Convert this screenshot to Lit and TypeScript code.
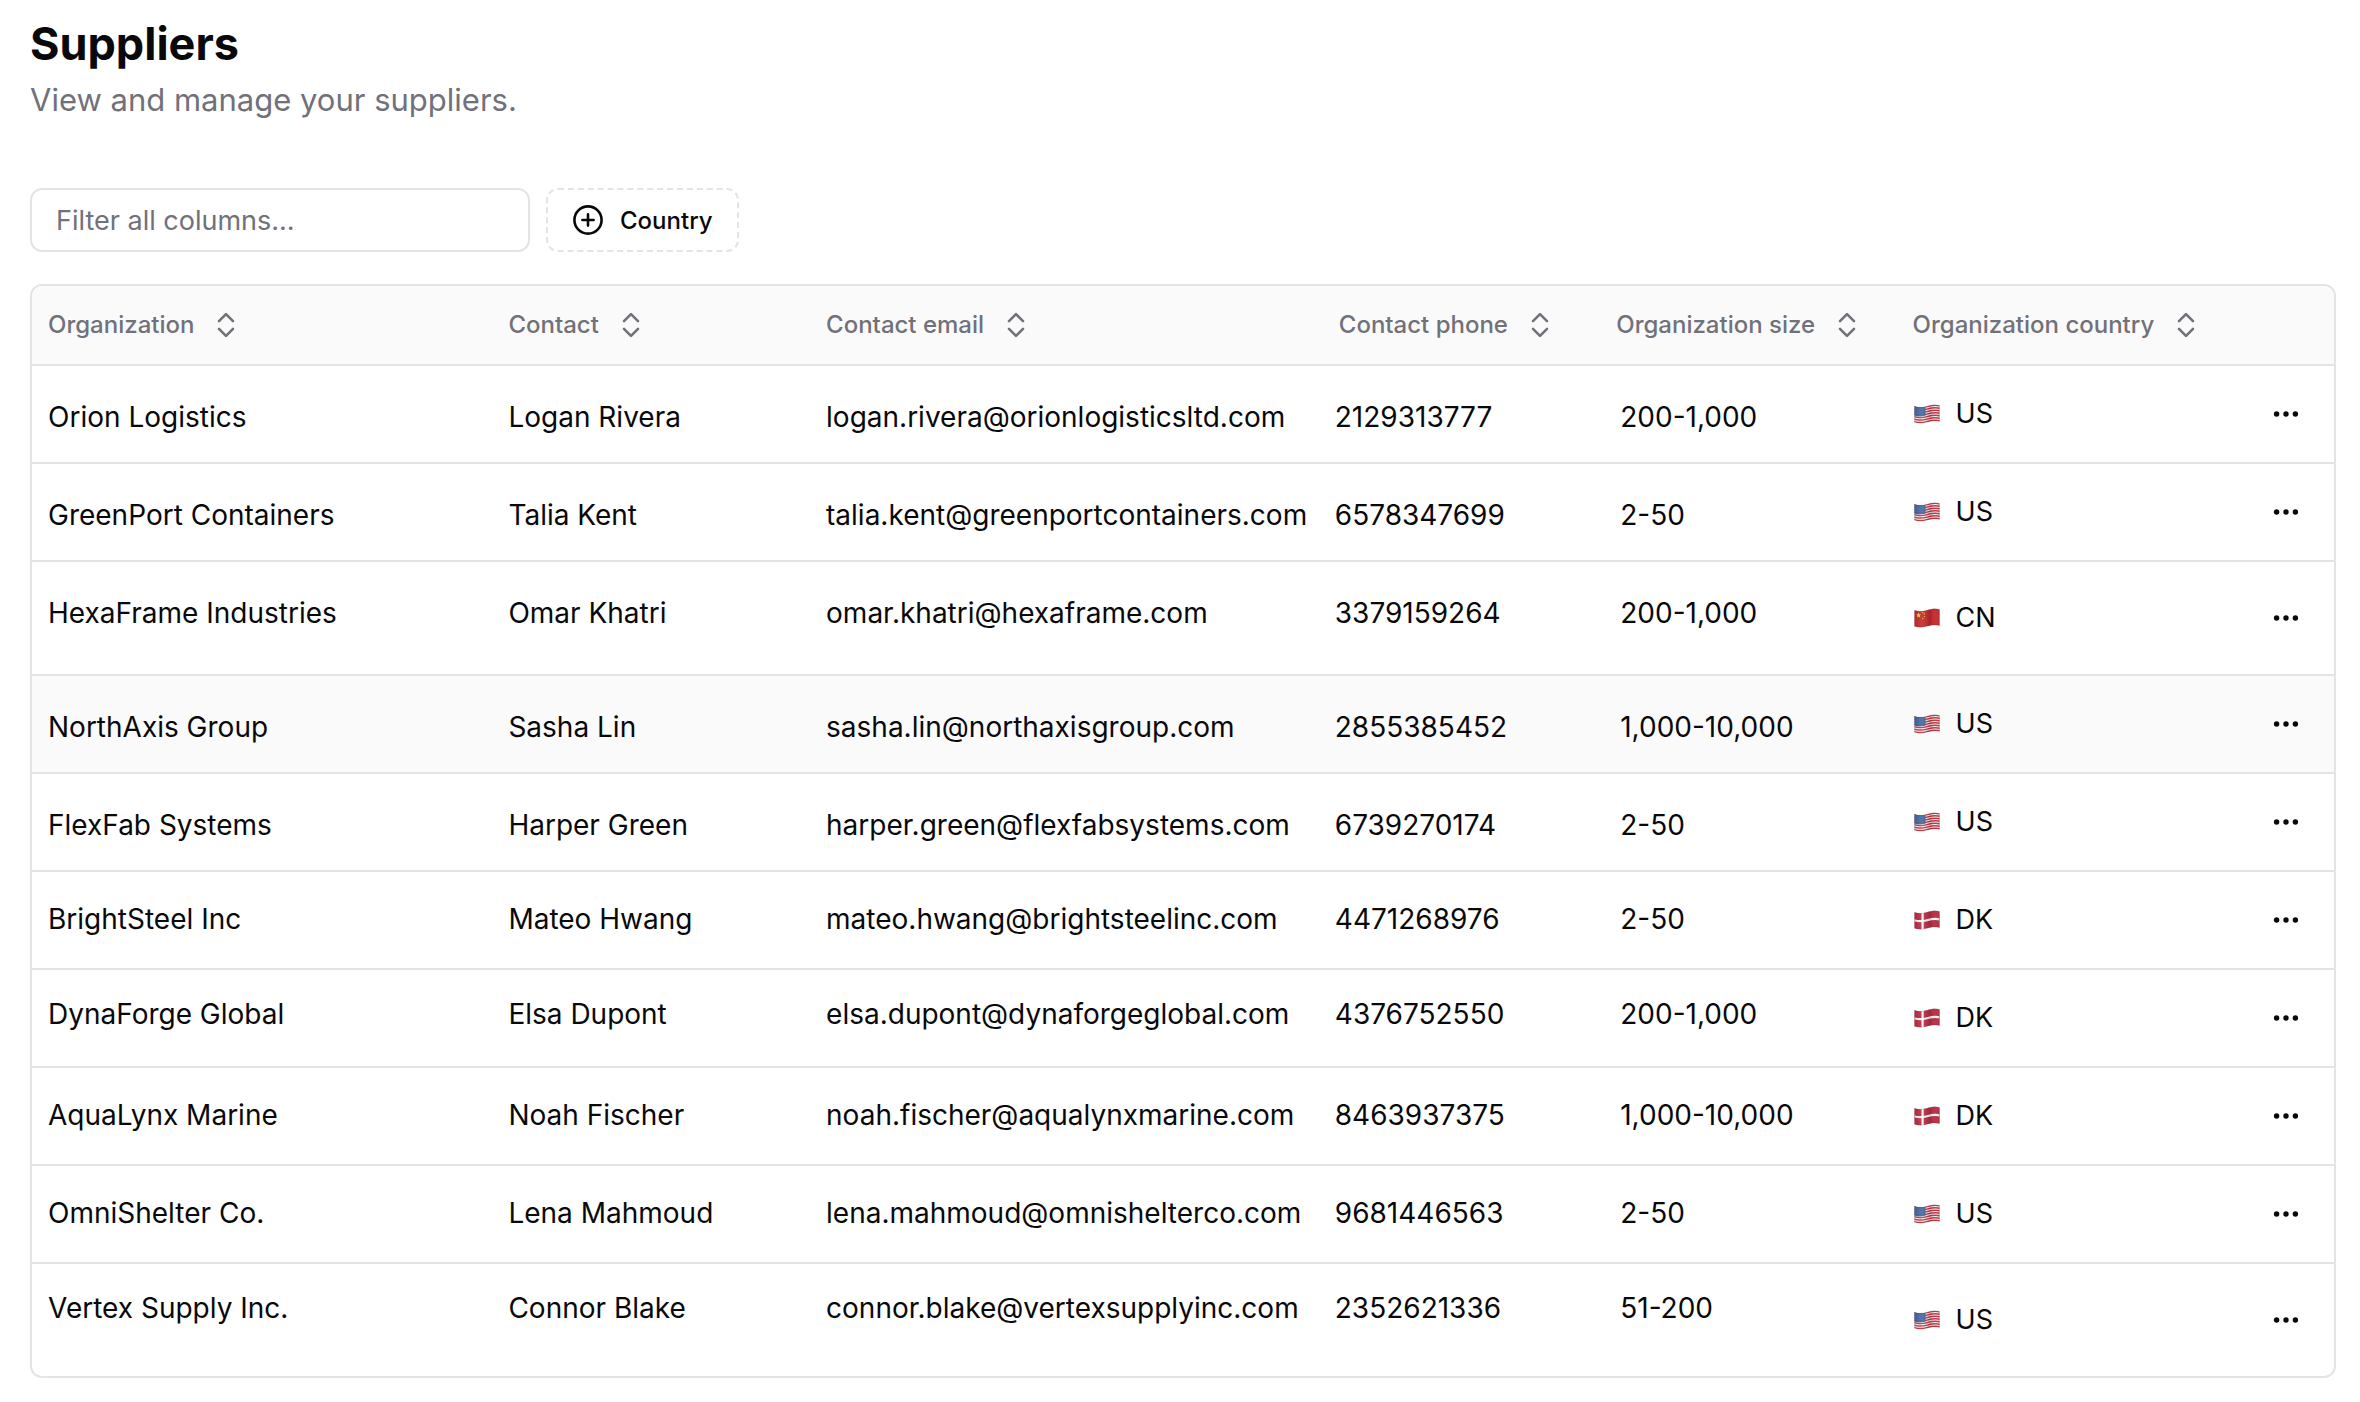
import { LitElement, html, svg, css } from "lit";
import { customElement, property, state } from "lit/decorators.js";
import { classMap } from "lit/directives/class-map.js";

type CountryCode = "US" | "CN" | "DK";
type RowLayout = "low" | "middle" | "high";

interface Supplier {
  organization: string;
  contact: string;
  email: string;
  phone: string;
  size: string;
  country: CountryCode;
  layout: RowLayout;
  tall?: boolean;
  active?: boolean;
}

const suppliers: Supplier[] = [
  { organization: "Orion Logistics", contact: "Logan Rivera", email: "logan.rivera@orionlogisticsltd.com", phone: "2129313777", size: "200-1,000", country: "US", layout: "low" },
  { organization: "GreenPort Containers", contact: "Talia Kent", email: "talia.kent@greenportcontainers.com", phone: "6578347699", size: "2-50", country: "US", layout: "low" },
  { organization: "HexaFrame Industries", contact: "Omar Khatri", email: "omar.khatri@hexaframe.com", phone: "3379159264", size: "200-1,000", country: "CN", layout: "low", tall: true },
  { organization: "NorthAxis Group", contact: "Sasha Lin", email: "sasha.lin@northaxisgroup.com", phone: "2855385452", size: "1,000-10,000", country: "US", layout: "low", active: true },
  { organization: "FlexFab Systems", contact: "Harper Green", email: "harper.green@flexfabsystems.com", phone: "6739270174", size: "2-50", country: "US", layout: "low" },
  { organization: "BrightSteel Inc", contact: "Mateo Hwang", email: "mateo.hwang@brightsteelinc.com", phone: "4471268976", size: "2-50", country: "DK", layout: "middle" },
  { organization: "DynaForge Global", contact: "Elsa Dupont", email: "elsa.dupont@dynaforgeglobal.com", phone: "4376752550", size: "200-1,000", country: "DK", layout: "high" },
  { organization: "AquaLynx Marine", contact: "Noah Fischer", email: "noah.fischer@aqualynxmarine.com", phone: "8463937375", size: "1,000-10,000", country: "DK", layout: "middle" },
  { organization: "OmniShelter Co.", contact: "Lena Mahmoud", email: "lena.mahmoud@omnishelterco.com", phone: "9681446563", size: "2-50", country: "US", layout: "middle" },
  { organization: "Vertex Supply Inc.", contact: "Connor Blake", email: "connor.blake@vertexsupplyinc.com", phone: "2352621336", size: "51-200", country: "US", layout: "high", tall: true },
];

const columns = [
  { key: "organization", label: "Organization" },
  { key: "contact", label: "Contact" },
  { key: "email", label: "Contact email" },
  { key: "phone", label: "Contact phone" },
  { key: "size", label: "Organization size" },
  { key: "country", label: "Organization country" },
] as const;

type ColumnKey = (typeof columns)[number]["key"];

const FLAG_SHAPE = "M0.5 2.2C4.5 3.6 8 3.6 13 2.2S21.5 0.2 25.5 1.4V17.6C21.5 16.4 18 17 13 18.2S4.5 19.6 0.5 18.2Z";
const wave = (y: number) => `M0 ${y + 1.8}C4.5 ${y + 3.2} 8 ${y + 3.2} 13 ${y + 1.8}S21.5 ${y - 0.2} 26 ${y + 1}`;

const flagArt = {
  US: svg`
    <rect width="26" height="20" fill="#f4eff0"></rect>
    ${[0.8, 3.3, 5.8, 8.3, 10.8, 13.3, 15.8].map(
      (y) => svg`<path d=${wave(y)} fill="none" stroke="#c23341" stroke-width="1.4"></path>`
    )}
    <path d="M0 1.5C4.5 3.6 8 3.5 11.5 2.6V11.4C8 12.4 4.5 12.6 0 11.4Z" fill="#41639f"></path>
    ${[4.8, 7, 9.2].map(
      (y) => svg`<path d=${`M1.6 ${y}q4 1 9 0`} fill="none" stroke="#7893c4" stroke-width="0.6" stroke-dasharray="0.7 1.1"></path>`
    )}`,
  CN: svg`
    <rect width="26" height="20" fill="#c4282e"></rect>
    <path d="M4.6 4.6l.7 1.7 1.8.1-1.4 1.2.5 1.8-1.6-1-1.6 1 .5-1.8-1.4-1.2 1.8-.1z" fill="#f8d348"></path>
    <circle cx="8.8" cy="4.4" r="0.7" fill="#f3bd3f"></circle>
    <circle cx="10.4" cy="6" r="0.7" fill="#f3bd3f"></circle>
    <circle cx="10.4" cy="8.6" r="0.7" fill="#f3bd3f"></circle>
    <circle cx="8.8" cy="10.6" r="0.7" fill="#f3bd3f"></circle>`,
  DK: svg`
    <rect width="26" height="20" fill="#b92c42"></rect>
    <path d="M8.6 0V20" stroke="#fbf6f6" stroke-width="2.2"></path>
    <path d="M0 10.2C4.5 11.6 8 11.6 13 10.2S21.5 8.2 26 9.4" fill="none" stroke="#fbf6f6" stroke-width="2.2"></path>`,
};

@customElement("country-flag")
class CountryFlag extends LitElement {
  @property() code: CountryCode = "US";

  static styles = css`
    :host {
      display: block;
      width: 26px;
      height: 20px;
    }
    .flag {
      display: block;
    }
  `;

  render() {
    return html`
      <svg class="flag" width="26" height="20" viewBox="0 0 26 20" aria-hidden="true">
        <defs>
          <clipPath id="shape"><path d=${FLAG_SHAPE}></path></clipPath>
          <linearGradient id="fold" x1="0" x2="1" y1="0" y2="0">
            <stop offset="0" stop-color="#000" stop-opacity="0.1"></stop>
            <stop offset="0.3" stop-color="#fff" stop-opacity="0.1"></stop>
            <stop offset="0.62" stop-color="#000" stop-opacity="0.14"></stop>
            <stop offset="0.85" stop-color="#fff" stop-opacity="0.04"></stop>
            <stop offset="1" stop-color="#000" stop-opacity="0.16"></stop>
          </linearGradient>
        </defs>
        <g clip-path="url(#shape)">
          ${flagArt[this.code]}
          <rect width="26" height="20" fill="url(#fold)"></rect>
        </g>
        <path d=${FLAG_SHAPE} fill="none" stroke="#000" stroke-opacity="0.18" stroke-width="0.6"></path>
      </svg>
    `;
  }
}

@customElement("app-root")
class AppRoot extends LitElement {
  @state() private query = "";
  @state() private sortKey: ColumnKey | null = null;
  @state() private ascending = true;

  static styles = css`
    :host {
      display: block;
      box-sizing: border-box;
      padding: 16px 24px 24px 30px;
      background: #fff;
      color: #09090b;
      font-family: Inter, "Open Sans", sans-serif;
      font-size: 28px;
      line-height: 40px;
    }
    .title {
      margin: 0;
      font-size: 45px;
      line-height: 56px;
      font-weight: 700;
    }
    .subtitle {
      margin: 4px 0 0;
      font-size: 31px;
      line-height: 48px;
      color: #71717a;
    }
    .toolbar {
      display: flex;
      gap: 16px;
      margin: 64px 0 32px;
    }
    .filter,
    .facet {
      box-sizing: border-box;
      height: 64px;
      border: 2px solid #e4e4e7;
      border-radius: 12px;
      background: #fff;
      color: inherit;
      font-family: inherit;
    }
    .filter {
      width: 500px;
      padding: 0 24px;
      font-size: 27px;
    }
    .filter::placeholder {
      color: #71717a;
      opacity: 1;
    }
    .facet {
      display: flex;
      align-items: center;
      gap: 16px;
      padding: 0 24px;
      border-style: dashed;
      font-size: 24px;
      font-weight: 500;
    }
    .frame {
      border: 2px solid #e4e4e7;
      border-radius: 12px;
      overflow: hidden;
    }
    .table {
      width: 100%;
      table-layout: fixed;
      border-collapse: separate;
      border-spacing: 0;
      white-space: nowrap;
    }
    .col-organization { width: 20%; }
    .col-contact { width: 13.8%; }
    .col-email { width: 22.1%; }
    .col-phone { width: 12.4%; }
    .col-size { width: 12.7%; }
    .col-country { width: 13%; }
    .head {
      height: 78px;
      padding: 0 16px;
      border-bottom: 2px solid #e4e4e7;
      background: #fafafa;
      text-align: left;
      font-weight: 450;
    }
    .head-phone { padding-left: 20px; }
    .head-size { padding-left: 12px; }
    .sort {
      display: flex;
      align-items: center;
      gap: 16px;
      padding: 0;
      border: 0;
      background: none;
      color: #71717a;
      font: inherit;
      font-size: 24px;
      cursor: pointer;
    }
    .cell {
      height: 96px;
      padding: 0 16px;
      border-bottom: 2px solid #e4e4e7;
      vertical-align: middle;
    }
    .tall .cell { height: 112px; }
    .row:last-child .cell { border-bottom: 0; }
    .active .cell { background: #fafafa; }
    .text {
      box-sizing: border-box;
      vertical-align: top;
    }
    .low .text { padding-top: 31px; }
    .middle .text { padding-top: 27px; }
    .high .text { padding-top: 24px; }
    .country {
      display: flex;
      align-items: center;
      gap: 16px;
      font-size: 27px;
      padding-left: 1px;
    }
    .actions { text-align: right; }
    .menu {
      display: inline-flex;
      align-items: center;
      justify-content: center;
      width: 64px;
      height: 64px;
      padding: 0;
      border: 0;
      border-radius: 12px;
      background: none;
      color: inherit;
      vertical-align: middle;
      cursor: pointer;
    }
    .icon { display: block; }
  `;

  private sortBy(key: ColumnKey) {
    this.ascending = this.sortKey === key ? !this.ascending : true;
    this.sortKey = key;
  }

  private get rows(): Supplier[] {
    const q = this.query.trim().toLowerCase();
    const found = suppliers.filter((s) => !q || columns.some((c) => s[c.key].toLowerCase().includes(q)));
    const key = this.sortKey;
    if (!key) return found;
    const dir = this.ascending ? 1 : -1;
    return [...found].sort((a, b) => dir * a[key].localeCompare(b[key]));
  }

  private renderRow(s: Supplier) {
    const rowClass = classMap({ row: true, [s.layout]: true, tall: !!s.tall, active: !!s.active });
    return html`
      <tr class=${rowClass}>
        <td class="cell text">${s.organization}</td>
        <td class="cell text">${s.contact}</td>
        <td class="cell text">${s.email}</td>
        <td class="cell text">${s.phone}</td>
        <td class="cell text">${s.size}</td>
        <td class="cell">
          <div class="country"><country-flag .code=${s.country}></country-flag><span>${s.country}</span></div>
        </td>
        <td class="cell actions">
          <button class="menu" type="button" aria-label=${`Actions for ${s.organization}`}>
            <svg class="icon" width="32" height="32" viewBox="0 0 32 32" fill="currentColor" aria-hidden="true">
              <circle cx="6.6" cy="16" r="2.7"></circle>
              <circle cx="16" cy="16" r="2.7"></circle>
              <circle cx="25.4" cy="16" r="2.7"></circle>
            </svg>
          </button>
        </td>
      </tr>
    `;
  }

  render() {
    return html`
      <h1 class="title">Suppliers</h1>
      <p class="subtitle">View and manage your suppliers.</p>
      <div class="toolbar">
        <input
          class="filter"
          type="text"
          aria-label="Filter all columns"
          placeholder="Filter all columns..."
          .value=${this.query}
          @input=${(e: Event) => (this.query = (e.target as HTMLInputElement).value)}
        />
        <button class="facet" type="button">
          <svg class="icon" width="32" height="32" viewBox="0 0 32 32" fill="none" stroke="currentColor" stroke-width="2.6" stroke-linecap="round" aria-hidden="true">
            <circle cx="16" cy="16" r="13.6"></circle>
            <path d="M16 10.4V21.6M10.4 16H21.6"></path>
          </svg>
          Country
        </button>
      </div>
      <div class="frame">
        <table class="table">
          <colgroup>
            ${columns.map((c) => html`<col class=${`col-${c.key}`} />`)}
            <col />
          </colgroup>
          <thead>
            <tr>
              ${columns.map(
                (c) => html`
                  <th class=${`head head-${c.key}`} scope="col">
                    <button class="sort" type="button" @click=${() => this.sortBy(c.key)}>
                      ${c.label}
                      <svg class="icon" width="32" height="32" viewBox="0 0 32 32" fill="none" stroke="currentColor" stroke-width="2.6" stroke-linecap="round" stroke-linejoin="round" aria-hidden="true">
                        <path d="M9 12.2L16 5.2L23 12.2M9 19.8L16 26.8L23 19.8"></path>
                      </svg>
                    </button>
                  </th>
                `
              )}
              <th class="head" scope="col" aria-label="Actions"></th>
            </tr>
          </thead>
          <tbody>
            ${this.rows.map((s) => this.renderRow(s))}
          </tbody>
        </table>
      </div>
    `;
  }
}
